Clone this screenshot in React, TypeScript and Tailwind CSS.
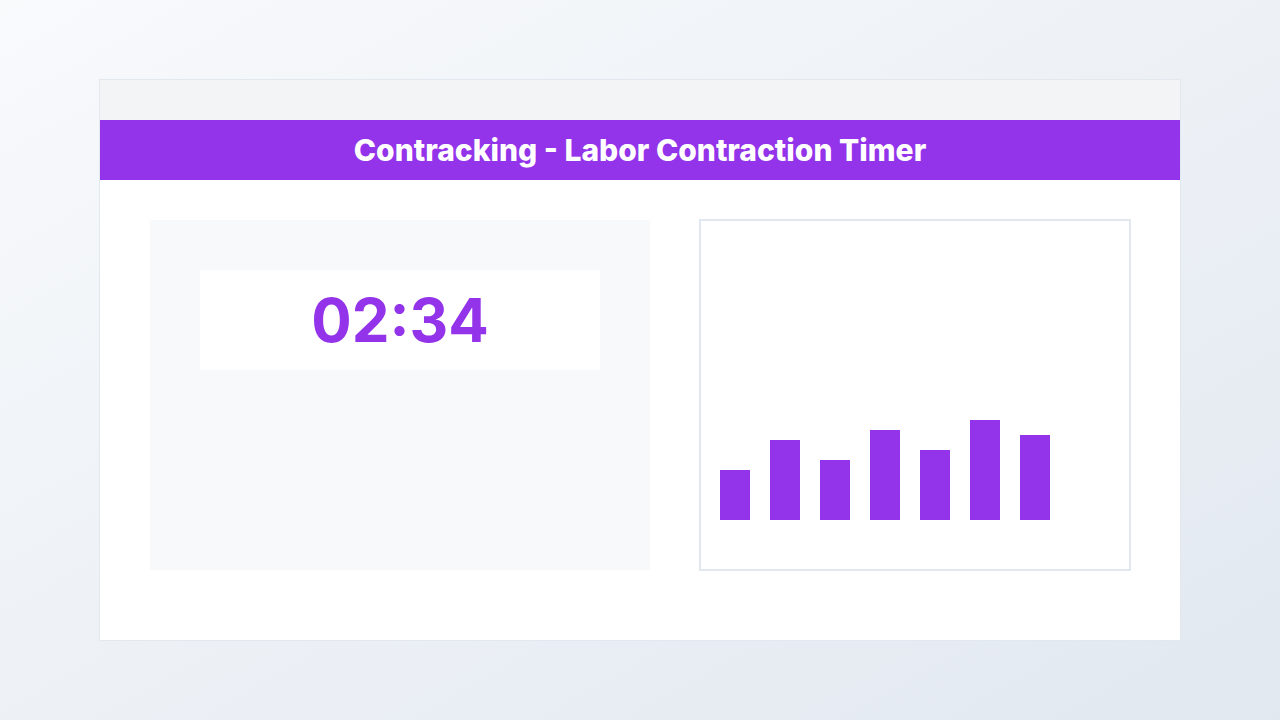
const bars = [50, 80, 60, 90, 70, 100, 85];

export default function App() {
  return (
    <div
      className="w-[1280px] h-[720px] bg-gradient-to-br from-[#f8fafc] to-[#e2e8f0] pt-[79px] pl-[99px]"
      style={{ fontFamily: "Inter, 'Noto Sans', sans-serif" }}
    >
      <div className="w-[1082px] h-[562px] border border-[#e2e8f0] bg-white flex flex-col">
        {/* top bar */}
        <div className="h-[40px] bg-[#f3f4f6]" />
        {/* title */}
        <div className="h-[60px] bg-[#9333ea] flex items-center justify-center">
          <h1 className="text-3xl font-extrabold text-white">
            Contracking - Labor Contraction Timer
          </h1>
        </div>

        <div className="flex pt-[40px] pl-[50px] gap-[49px]">
          {/* timer panel */}
          <div className="w-[500px] h-[350px] bg-[#f8f9fb] pt-[50px] px-[50px]">
            <div className="h-[100px] bg-white flex items-center justify-center">
              <span className="text-6xl font-bold text-[#9333ea]">02:34</span>
            </div>
          </div>

          {/* chart panel */}
          <div className="w-[432px] h-[352px] -mt-[1px] border-2 border-[#e2e8f0] bg-white flex items-end gap-[20px] pl-[19px] pb-[49px]">
            {bars.map((h, i) => (
              <div key={i} className="w-[30px] bg-[#9333ea]" style={{ height: h }} />
            ))}
          </div>
        </div>
      </div>
    </div>
  );
}
